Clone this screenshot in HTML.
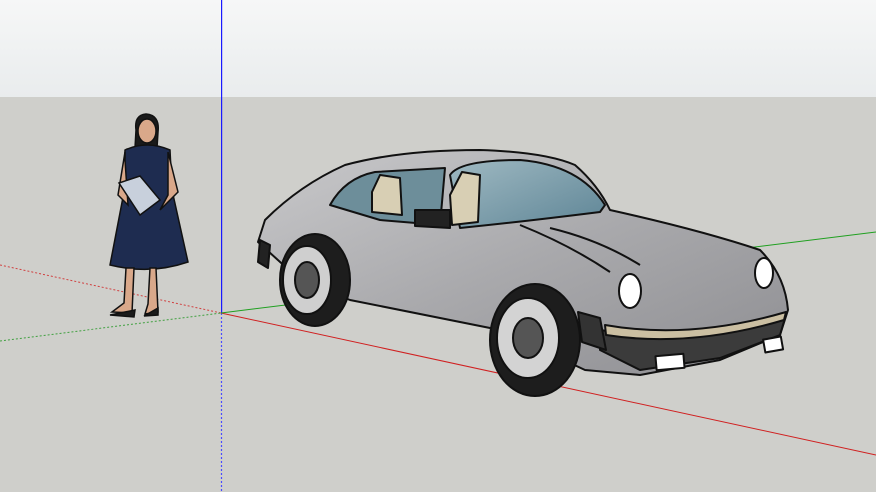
<!DOCTYPE html>
<html><head><style>
html,body{margin:0;padding:0;width:876px;height:492px;overflow:hidden;background:#cfcfcb}
svg{display:block}
</style></head><body>
<svg width="876" height="492" viewBox="0 0 876 492" xmlns="http://www.w3.org/2000/svg">
<defs>
<linearGradient id="sky" x1="0" y1="0" x2="0" y2="1"><stop offset="0" stop-color="#f6f7f7"/><stop offset="1" stop-color="#e9eced"/></linearGradient>
<linearGradient id="body" x1="0" y1="0" x2="1" y2="1"><stop offset="0" stop-color="#c9c9cb"/><stop offset="0.5" stop-color="#a9a9ac"/><stop offset="1" stop-color="#8e8e92"/></linearGradient>
<linearGradient id="glass" x1="0" y1="0" x2="1" y2="1"><stop offset="0" stop-color="#9fb9c2"/><stop offset="1" stop-color="#5e8596"/></linearGradient>
</defs>
<rect width="876" height="97" fill="url(#sky)"/>
<rect y="97" width="876" height="395" fill="#cfcfcb"/>
<!-- axes -->
<rect x="221" y="0" width="1.2" height="313" fill="#1a1aff"/>
<line x1="221.5" y1="313" x2="221.5" y2="492" stroke="#4a4aff" stroke-width="1.2" stroke-dasharray="2,2"/>
<line x1="221" y1="313" x2="876" y2="455" stroke="#d02020" stroke-width="1"/>
<line x1="0" y1="265" x2="221" y2="313" stroke="#d04040" stroke-width="1" stroke-dasharray="2,2"/>
<line x1="221" y1="313" x2="876" y2="232" stroke="#20a020" stroke-width="1"/>
<line x1="0" y1="341" x2="221" y2="313" stroke="#40a040" stroke-width="1" stroke-dasharray="2,2"/>
<!-- woman -->
<g stroke="#111" stroke-width="1.5">
<path d="M136 130 Q134 115 146 114 Q160 115 158 132 L157 148 L135 148 Z" fill="#1a1a1a"/>
<ellipse cx="147" cy="131" rx="9" ry="12" fill="#d9a88a"/>
<path d="M125 150 Q147 140 170 150 L172 190 L188 262 Q150 275 110 265 L124 192 Z" fill="#1e2c50"/>
<path d="M125 152 L118 195 L128 205 L125 160 Z M168 152 L178 192 L160 210 L168 195 Z" fill="#d9a88a"/>
<path d="M119 183 L140 176 L160 200 L140 215 Z" fill="#c8d0dc"/>
<path d="M126 268 L124 303 L112 312 L132 313 L134 268 Z M150 268 L148 304 L145 314 L158 312 L156 268 Z" fill="#d9a88a"/>
<path d="M110 315 L135 310 L134 317 Z M144 316 L158 308 L158 315 Z" fill="#1b1b1b"/>
</g>
<!-- car -->
<g stroke="#111" stroke-width="2" stroke-linejoin="round">
<path d="M258 242 L265 220 Q300 185 345 165 Q400 150 480 150 Q545 152 575 165 Q598 185 610 210 Q700 230 760 250 Q785 275 788 310 L780 335 L720 360 L640 375 L585 370 L500 330 L350 300 L300 280 Z" fill="url(#body)"/>
<path d="M330 205 Q345 178 375 172 L445 168 L440 225 L380 220 Z" fill="#6d8e9a"/>
<path d="M450 175 Q460 160 520 160 Q580 165 605 205 L600 212 Q520 222 460 228 Z" fill="url(#glass)"/>
<path d="M372 192 L380 175 L400 178 L402 215 L372 212 Z M450 195 L462 172 L480 175 L478 222 L452 225 Z" fill="#d8cfb4"/>
<path d="M415 210 L450 210 L450 228 L415 226 Z" fill="#222"/>
<path d="M260 240 L258 262 L268 268 L270 245 Z" fill="#222"/>
<path d="M600 330 Q690 345 785 318 L780 335 L720 358 L640 370 L600 350 Z" fill="#3b3b3b"/>
<path d="M605 325 Q690 340 786 312 L784 320 Q690 348 606 335 Z" fill="#cbbfa2"/>
<path d="M578 312 L600 318 L606 350 L582 342 Z" fill="#333"/>
<ellipse cx="630" cy="291" rx="11" ry="17" fill="#fff"/>
<ellipse cx="764" cy="273" rx="9" ry="15" fill="#fff"/>
<rect x="656" y="355" width="28" height="14" fill="#fff" transform="rotate(-5 670 362)"/>
<rect x="764" y="338" width="18" height="13" fill="#fff" transform="rotate(-10 773 344)"/>
<path d="M520 225 Q570 245 610 272" fill="none"/>
<path d="M550 228 Q600 240 640 265" fill="none"/>
<ellipse cx="315" cy="280" rx="35" ry="46" fill="#1d1d1d"/>
<ellipse cx="307" cy="280" rx="24" ry="34" fill="#cfcfcf"/>
<ellipse cx="307" cy="280" rx="12" ry="18" fill="#555"/>
<ellipse cx="535" cy="340" rx="45" ry="56" fill="#1d1d1d"/>
<ellipse cx="528" cy="338" rx="31" ry="40" fill="#d3d3d3"/>
<ellipse cx="528" cy="338" rx="15" ry="20" fill="#555"/>
</g>
</svg>
</body></html>
